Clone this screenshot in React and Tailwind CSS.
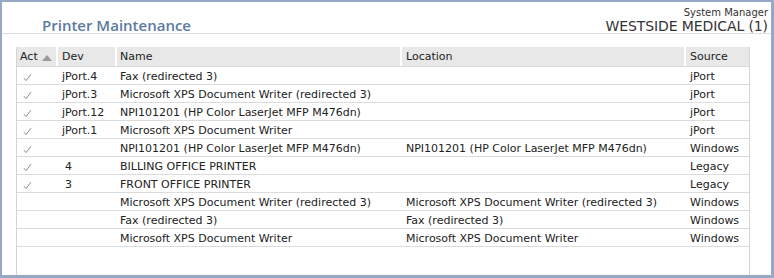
import React from "react";

const rows = [
  { act: true, dev: "jPort.4", name: "Fax (redirected 3)", loc: "", src: "jPort" },
  { act: true, dev: "jPort.3", name: "Microsoft XPS Document Writer (redirected 3)", loc: "", src: "jPort" },
  { act: true, dev: "jPort.12", name: "NPI101201 (HP Color LaserJet MFP M476dn)", loc: "", src: "jPort" },
  { act: true, dev: "jPort.1", name: "Microsoft XPS Document Writer", loc: "", src: "jPort" },
  { act: true, dev: "", name: "NPI101201 (HP Color LaserJet MFP M476dn)", loc: "NPI101201 (HP Color LaserJet MFP M476dn)", src: "Windows" },
  { act: true, dev: "4", name: "BILLING OFFICE PRINTER", loc: "", src: "Legacy", num: true },
  { act: true, dev: "3", name: "FRONT OFFICE PRINTER", loc: "", src: "Legacy", num: true },
  { act: false, dev: "", name: "Microsoft XPS Document Writer (redirected 3)", loc: "Microsoft XPS Document Writer (redirected 3)", src: "Windows" },
  { act: false, dev: "", name: "Fax (redirected 3)", loc: "Fax (redirected 3)", src: "Windows" },
  { act: false, dev: "", name: "Microsoft XPS Document Writer", loc: "Microsoft XPS Document Writer", src: "Windows" },
];

const cols = "grid grid-cols-[41px_59px_285px_284px_64px]";

function Check() {
  return (
    <svg width="9" height="9" viewBox="0 0 9 9" className="ml-[6px]">
      <path d="M1 5.2 L3 7.6 L8 1.2" fill="none" stroke="#8a8a8a" strokeWidth="1" />
    </svg>
  );
}

export default function App() {
  return (
    <div
      className="w-[774px] h-[278px] bg-white border-l-2 border-t-2 border-r-[3px] border-b-[3px] border-[#95a8c6] flex flex-col"
      style={{ fontFamily: "'DejaVu Sans', Verdana, sans-serif" }}
    >
      <div className="h-[32px] flex justify-between items-end border-b border-[#dedede]">
        <div
          className="pl-[40px] text-[15px] font-semibold text-[#5c7aa0] leading-[16px]"
          style={{ fontFamily: "'Open Sans', sans-serif" }}
        >
          Printer Maintenance
        </div>
        <div className="flex flex-col items-end pr-[3px] text-[#333]">
          <div className="text-[10px] leading-[12px] mb-[1px]">System Manager</div>
          <div className="text-[14px] leading-[13px] tracking-[-0.1px]">WESTSIDE MEDICAL (1)</div>
        </div>
      </div>
      <div className="flex-1 pt-[13px] pl-[14px]">
        <div className="w-[734px] h-full border-l border-r border-[#d4d4d4] text-[11px] text-[#222]">
          <div className={`${cols} h-[20px] bg-[#e8e8e8] border-b border-[#d8d8d8] items-center`}>
            <div className="pl-[3px] pt-[2px] flex items-center gap-[4px] border-r-2 border-white h-full">
              <span>Act</span>
              <svg width="10" height="6" viewBox="0 0 10 6"><path d="M0 6 L5 0 L10 6 Z" fill="#9a9a9a" /></svg>
            </div>
            <div className="pl-[4px] pt-[2px] flex items-center border-r-2 border-white h-full">Dev</div>
            <div className="pl-[3px] pt-[2px] flex items-center border-r-2 border-white h-full">Name</div>
            <div className="pl-[4px] pt-[2px] flex items-center border-r-2 border-white h-full">Location</div>
            <div className="pl-[4px] pt-[2px] flex items-center h-full">Source</div>
          </div>
          {rows.map((r, i) => (
            <div key={i} className={`${cols} h-[18px] pt-[2px] border-b border-[#dcdcdc] items-center whitespace-nowrap`}>
              <div>{r.act ? <Check /> : null}</div>
              <div className={r.num ? "pl-[7px]" : "pl-[4px]"}>{r.dev}</div>
              <div className="pl-[3px]">{r.name}</div>
              <div className="pl-[4px]">{r.loc}</div>
              <div className="pl-[4px]">{r.src}</div>
            </div>
          ))}
        </div>
      </div>
    </div>
  );
}
